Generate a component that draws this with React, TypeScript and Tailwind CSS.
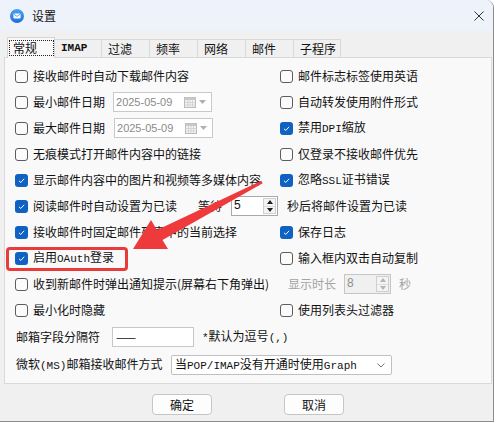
import React from 'react';

const cjk = "font-['Noto_Sans_CJK_SC',sans-serif]";

// half-width latin runs inside the Chinese labels
const M: React.FC<{ children: React.ReactNode; bold?: boolean }> = ({ children, bold }) => (
  <span className={`font-['Liberation_Mono',monospace] text-[11px] ${bold ? 'font-bold' : ''}`}>{children}</span>
);

const Check: React.FC<{ on?: boolean }> = ({ on }) =>
  on ? (
    <span className="flex h-[13px] w-[13px] shrink-0 items-center justify-center rounded-[3px] bg-[#0f62c2]">
      <svg viewBox="0 0 10 10" className="h-[9px] w-[9px]">
        <path d="M2.2 5.3 4.2 7.2 7.9 3.1" fill="none" stroke="white" strokeWidth="1.1" />
      </svg>
    </span>
  ) : (
    <span className="h-[13px] w-[13px] shrink-0 rounded-[3px] border border-[#5c5c5c] bg-[#fbfbfb]" />
  );

const Opt: React.FC<{ on?: boolean; children: React.ReactNode; className?: string }> = ({ on, children, className = '' }) => (
  <div className={`flex items-center gap-[5px] ${className}`}>
    <Check on={on} />
    <span className="whitespace-nowrap">{children}</span>
  </div>
);

const Spin: React.FC<{ value: string; disabled?: boolean; className?: string }> = ({ value, disabled, className = '' }) => {
  const arrow = disabled ? '#b5b5b5' : '#202020';
  return (
    <div
      className={`flex h-[20px] w-[47px] border ${
        disabled ? 'border-[#c6c6c6] bg-[#f0f0f0] text-[#8f8f8f]' : 'border-[#a9a9a9] bg-white text-[#111]'
      } ${className}`}
    >
      <span className="flex-1 pl-[2px] font-['Liberation_Sans',sans-serif] text-[12px] leading-[17px]">{value}</span>
      <div className="my-[1px] mr-[1px] flex w-[13px] flex-col border border-[#cfcfcf] bg-[#f4f4f4]">
        <div className="flex flex-1 items-center justify-center border-b border-[#dcdcdc]">
          <svg viewBox="0 0 6 4" className="h-[4px] w-[6px]"><path d="M0 4 3 0 6 4Z" fill={arrow} /></svg>
        </div>
        <div className="flex flex-1 items-center justify-center">
          <svg viewBox="0 0 6 4" className="h-[4px] w-[6px]"><path d="M0 0 3 4 6 0Z" fill={arrow} /></svg>
        </div>
      </div>
    </div>
  );
};

const DateBox: React.FC<{ className?: string }> = ({ className = '' }) => (
  <div className={`flex h-[20px] w-[99px] items-center border border-[#c9c9c9] bg-white pl-[2px] ${className}`}>
    <span className="font-['Liberation_Sans',sans-serif] text-[11px] text-[#8a8a8a]">2025-05-09</span>
    <svg viewBox="0 0 12 11" className="ml-[12px] h-[11px] w-[12px]">
      <rect x="0.5" y="0.5" width="11" height="10" fill="#f3f3f3" stroke="#b9b9b9" />
      <rect x="0.5" y="0.5" width="11" height="2.5" fill="#c9c9c9" />
      <path d="M3.5 3v7.5M6 3v7.5M8.5 3v7.5M0.5 5.5h11M0.5 8h11" stroke="#cfcfcf" strokeWidth="0.8" />
    </svg>
    <svg viewBox="0 0 7 4" className="ml-[3px] h-[4px] w-[7px]"><path d="M0 0 3.5 4 7 0Z" fill="#b0b0b0" /></svg>
  </div>
);

const tabs = ['IMAP', '过滤', '频率', '网络', '邮件', '子程序'];

export default function App() {
  return (
    <div className={`relative h-[423px] w-[496px] overflow-hidden bg-white text-[12px] text-[#111] ${cjk}`}>
      <div className="flex h-[422px] w-[494px] flex-col rounded-tr-[8px] border-r border-b border-[#8c8c8c] bg-[#f0f0f0]">
        {/* title bar */}
        <div className="flex h-[31px] shrink-0 items-center rounded-tr-[8px] bg-[#eef2fa] pl-[10px]">
          <svg viewBox="0 0 14 14" className="h-[14px] w-[14px]">
            <defs>
              <linearGradient id="ic" x1="0" y1="0" x2="0" y2="1">
                <stop offset="0" stopColor="#4aa3f5" />
                <stop offset="1" stopColor="#1f6fd6" />
              </linearGradient>
            </defs>
            <circle cx="7" cy="7" r="7" fill="url(#ic)" />
            <rect x="3.4" y="4.6" width="7.2" height="5" rx="0.8" fill="white" />
            <path d="M3.6 5 7 7.4 10.4 5" fill="none" stroke="#3b8ce8" strokeWidth="0.8" />
          </svg>
          <span className="ml-[8px] text-[12px]">设置</span>
          <svg viewBox="0 0 10 10" className="ml-auto mr-[9px] h-[10px] w-[10px]">
            <path d="M0.5 0.5 9.5 9.5M9.5 0.5 0.5 9.5" stroke="#333" strokeWidth="1" />
          </svg>
        </div>

        {/* tabs */}
        <div className="mt-[6px] flex h-[20px] shrink-0 items-end pl-[7px]">
          <div className="relative z-10 -mb-px flex h-[21px] w-[48px] items-start border border-b-0 border-[#d5d5d5] bg-[#f9f9f9] pt-[2px] pl-px">
            <span className="flex h-[16px] w-[45px] items-center border border-dotted border-[#222] pl-[3px] leading-none">常规</span>
          </div>
          {tabs.map((t, i) => (
            <div
              key={t}
              className={`flex h-[18px] items-center border border-b-0 border-l-0 border-[#d9d9d9] bg-[#f0f0f0] pl-[6px] leading-none ${
                i === 0 || i === 5 ? 'w-[47px]' : 'w-[48px]'
              }`}
            >
              {t === 'IMAP' ? <M bold>IMAP</M> : t}
            </div>
          ))}
        </div>

        {/* general page */}
        <div className="ml-[4px] flex h-[327px] w-[488px] shrink-0 flex-col border border-[#d9d9d9] bg-[#f9f9f9] pt-[5px] pl-[10px]">
          <div className="flex h-[26px] items-center">
            <Opt className="w-[265px]">接收邮件时自动下载邮件内容</Opt>
            <Opt>邮件标志标签使用英语</Opt>
          </div>
          <div className="flex h-[26px] items-center">
            <div className="flex w-[265px] items-center">
              <Opt>最小邮件日期</Opt>
              <DateBox className="ml-[8px]" />
            </div>
            <Opt>自动转发使用附件形式</Opt>
          </div>
          <div className="flex h-[26px] items-center">
            <div className="flex w-[265px] items-center">
              <Opt>最大邮件日期</Opt>
              <DateBox className="ml-[9px] w-[98px]" />
            </div>
            <Opt on>
              禁用<M>DPI</M>缩放
            </Opt>
          </div>
          <div className="flex h-[26px] items-center">
            <Opt className="w-[265px]">无痕模式打开邮件内容中的链接</Opt>
            <Opt>仅登录不接收邮件优先</Opt>
          </div>
          <div className="flex h-[26px] items-center">
            <Opt on className="w-[265px]">显示邮件内容中的图片和视频等多媒体内容</Opt>
            <Opt on>
              忽略<M>SSL</M>证书错误
            </Opt>
          </div>
          <div className="flex h-[26px] items-center">
            <Opt on className="w-[183px]">阅读邮件时自动设置为已读</Opt>
            <span>等待</span>
            <Spin value="5" className="ml-[9px]" />
            <span className="ml-[9px]">秒后将邮件设置为已读</span>
          </div>
          <div className="flex h-[26px] items-center">
            <Opt on className="w-[265px]">接收邮件时固定邮件列表中的当前选择</Opt>
            <Opt on>保存日志</Opt>
          </div>
          <div className="flex h-[26px] items-center">
            <Opt on className="w-[265px]">
              启用<M>OAuth</M>登录
            </Opt>
            <Opt>输入框内双击自动复制</Opt>
          </div>
          <div className="flex h-[26px] items-center">
            <Opt className="w-[273px]">收到新邮件时弹出通知提示(屏幕右下角弹出)</Opt>
            <span className="text-[#a3a3a3]">显示时长</span>
            <Spin value="8" disabled className="ml-[8px]" />
            <span className="ml-[8px] text-[#a3a3a3]">秒</span>
          </div>
          <div className="flex h-[26px] items-center">
            <Opt className="w-[265px]">最小化时隐藏</Opt>
            <Opt>使用列表头过滤器</Opt>
          </div>
          <div className="flex h-[28px] items-center pl-px">
            <span className="w-[96px]">邮箱字段分隔符</span>
            <div className="flex h-[20px] w-[82px] items-center border border-[#c8c8c8] bg-white pl-[3px]">——</div>
            <span className="ml-[8px]">
              <M>*</M>默认为逗号<M>(,)</M>
            </span>
          </div>
          <div className="flex h-[28px] items-center pl-px">
            <span className="w-[155px]">
              微软<M>(MS)</M>邮箱接收邮件方式
            </span>
            <div className="flex h-[20px] w-[221px] items-center rounded-[2px] border border-[#c0c0c0] bg-white pl-[3px]">
              <span>
                当<M>POP/IMAP</M>没有开通时使用<M>Graph</M>
              </span>
              <svg viewBox="0 0 8 5" className="mr-[6px] ml-auto h-[5px] w-[8px]">
                <path d="M0.5 0.5 4 4 7.5 0.5" fill="none" stroke="#666" strokeWidth="0.9" />
              </svg>
            </div>
          </div>
        </div>

        {/* dialog buttons */}
        <div className="mt-[10px] flex">
          <button className="ml-[152px] flex h-[21px] w-[60px] items-center justify-center rounded-[4px] border border-[#c6c6c6] bg-[#fdfdfd]">
            确定
          </button>
          <button className="ml-[72px] flex h-[21px] w-[60px] items-center justify-center rounded-[4px] border border-[#c6c6c6] bg-[#fdfdfd]">
            取消
          </button>
        </div>
      </div>

      {/* annotation: highlight box and arrow */}
      <div className="absolute top-[247px] left-[6px] h-[24px] w-[122px] rounded-[4px] border-[3px] border-[#ea3b3b]" />
      <svg className="absolute top-0 left-0" width="496" height="423" viewBox="0 0 496 423">
        <polygon
          points="133,249 168,249 162.5,240 262.7,183.3 261.3,180.7 157,230 151,220"
          fill="#ee3a3a"
        />
      </svg>
    </div>
  );
}
